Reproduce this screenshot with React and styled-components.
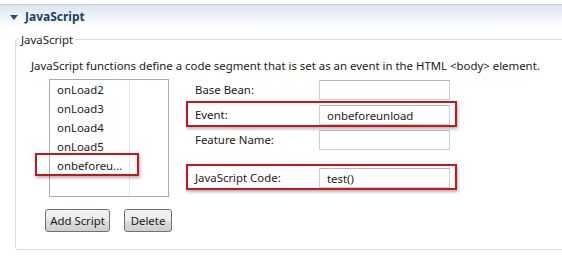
import React from "react"
import styled, { createGlobalStyle } from "styled-components"

const GlobalStyle = createGlobalStyle`
  html, body {
    margin: 0;
    padding: 0;
    background: #fff;
    overflow: hidden;
  }
  body {
    font-family: "Noto Sans", "Liberation Sans", sans-serif;
    font-size: 11.4px;
    color: #1a1a1a;
  }
`

const Section = styled.section`
  padding-top: 4px;
  width: 570px;
`

const Header = styled.div`
  display: flex;
  align-items: center;
  gap: 7px;
  height: 23px;
  padding-left: 10px;
  border-top: 1px solid #c6ced8;
  background: linear-gradient(to bottom, #dae4ee 0%, #eef3f8 45%, #ffffff 100%);
`

const Twisty = styled.span`
  width: 0;
  height: 0;
  border-left: 4px solid transparent;
  border-right: 4px solid transparent;
  border-top: 5px solid #2b4a76;
  margin-top: 1px;
`

const Title = styled.span`
  font-weight: bold;
  font-size: 12px;
  color: #203f6c;
`

const Content = styled.div`
  padding: 4px 0 0 15px;
`

const Group = styled.fieldset`
  margin: 0;
  padding: 10px 0 17px 0;
  border: 1px solid #dcdcdc;
  border-radius: 3px;
`

const Legend = styled.legend`
  padding: 0 2px;
  margin-left: 3px;
  font-size: 11.4px;
`

const Description = styled.p`
  margin: 0 0 4px 0;
  padding-left: 15px;
  line-height: 18px;
  white-space: nowrap;
`

const Body = styled.div`
  display: grid;
  grid-template-columns: 120px 1fr;
  column-gap: 26px;
  padding-left: 33px;
`

const ListBox = styled.div`
  position: relative;
  height: 118px;
  border: 1px solid #abadb3;
  box-sizing: border-box;
  background: linear-gradient(#e8e8e8, #e8e8e8) no-repeat 79px 0 / 1px 100%;
`

const ListItem = styled.div`
  position: relative;
  height: 19px;
  line-height: 19px;
  padding-left: 7px;
  ${props =>
    props.marked &&
    `
    &::after {
      content: "";
      position: absolute;
      left: -15px;
      width: 100px;
      top: -3px;
      bottom: -1px;
      border: 2px solid #c4161c;
      box-shadow: 1px 2px 3px rgba(0, 0, 0, 0.3);
    }
  `}
`

const Form = styled.div`
  display: flex;
  flex-direction: column;
  align-items: flex-start;
  gap: 4px;
`

const Row = styled.div`
  position: relative;
  display: grid;
  grid-template-columns: 124px 131px;
  align-items: center;
  height: 21px;
  margin-top: ${props => (props.spaced ? "13px" : "0")};
  ${props =>
    props.marked &&
    `
    &::after {
      content: "";
      position: absolute;
      left: -9px;
      right: -7px;
      top: -3px;
      bottom: -2px;
      border: 2px solid #c4161c;
      box-shadow: 1px 2px 3px rgba(0, 0, 0, 0.3);
    }
  `}
`

const Label = styled.span`
  white-space: nowrap;
`

const Field = styled.div`
  height: 20px;
  line-height: 19px;
  box-sizing: border-box;
  border: 1px solid #cfcfcf;
  border-top-color: #b5b5b5;
  padding-left: 7px;
  background: #fff;
`

const Buttons = styled.div`
  display: flex;
  gap: 14px;
  margin-top: 12px;
  padding-left: 29px;
`

const Button = styled.button`
  font: inherit;
  color: #1a1a1a;
  height: 23px;
  padding: 0;
  width: ${props => (props.wide ? "65px" : "48px")};
  border: 1px solid #707070;
  border-radius: 3px;
  background: linear-gradient(to bottom, #f3f3f3 0%, #ebebeb 50%, #dddddd 51%, #cfcfcf 100%);
`

const scripts = ["onLoad2", "onLoad3", "onLoad4", "onLoad5", "onbeforeu..."]

export default function App() {
  return (
    <>
      <GlobalStyle />
      <Section>
        <Header>
          <Twisty />
          <Title>JavaScript</Title>
        </Header>
        <Content>
          <Group>
            <Legend>JavaScript</Legend>
            <Description>
              JavaScript functions define a code segment that is set as an event in the HTML &lt;body&gt; element.
            </Description>
            <Body>
              <ListBox>
                {scripts.map((s, i) => (
                  <ListItem key={s} marked={i === 4}>{s}</ListItem>
                ))}
              </ListBox>
              <Form>
                <Row>
                  <Label>Base Bean:</Label>
                  <Field />
                </Row>
                <Row marked>
                  <Label>Event:</Label>
                  <Field>onbeforeunload</Field>
                </Row>
                <Row>
                  <Label>Feature Name:</Label>
                  <Field />
                </Row>
                <Row marked spaced>
                  <Label>JavaScript Code:</Label>
                  <Field>test()</Field>
                </Row>
              </Form>
            </Body>
            <Buttons>
              <Button wide>Add Script</Button>
              <Button>Delete</Button>
            </Buttons>
          </Group>
        </Content>
      </Section>
    </>
  )
}
